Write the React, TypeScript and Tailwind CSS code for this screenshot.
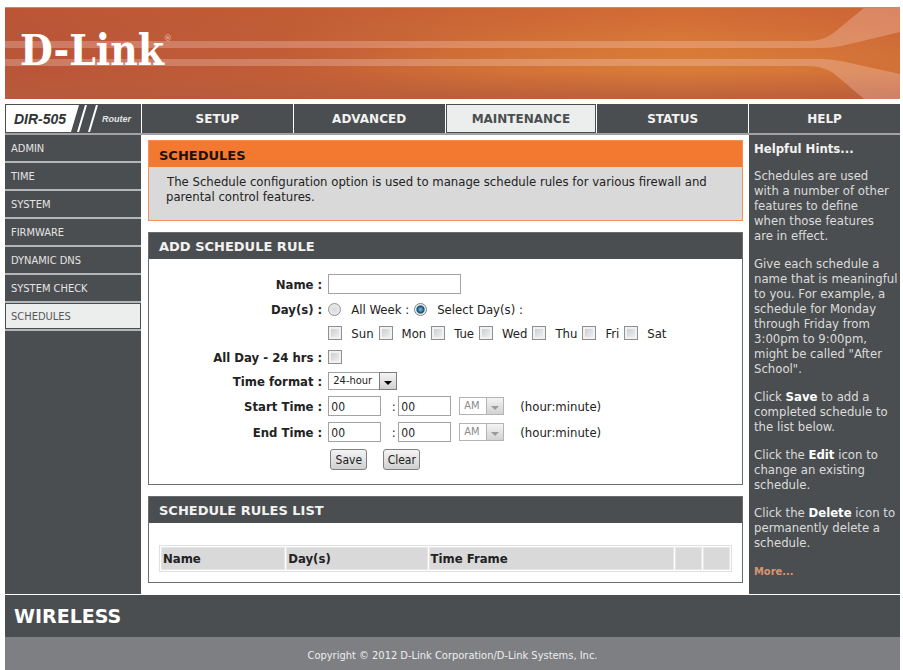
import React, { useState } from "react";
import { clsx } from "clsx";

const tabs = ["SETUP", "ADVANCED", "MAINTENANCE", "STATUS"];

const sideLinks = [
  "ADMIN",
  "TIME",
  "SYSTEM",
  "FIRMWARE",
  "DYNAMIC DNS",
  "SYSTEM CHECK",
  "SCHEDULES",
];

const days = ["Sun", "Mon", "Tue", "Wed", "Thu", "Fri", "Sat"];

function Banner() {
  return (
    <header className="relative h-[92px] overflow-hidden bg-[#c96033]">
      <svg
        className="absolute inset-0 h-full w-full"
        viewBox="0 0 895 92"
        preserveAspectRatio="none"
        aria-hidden="true"
      >
        <defs>
          <linearGradient id="base" x1="0" y1="0" x2="1" y2="0">
            <stop offset="0" stopColor="#b95538" />
            <stop offset="0.3" stopColor="#c05d37" />
            <stop offset="0.5" stopColor="#cc6937" />
            <stop offset="0.75" stopColor="#d77438" />
            <stop offset="1" stopColor="#cf6a38" />
          </linearGradient>
          <radialGradient id="glow" cx="0.76" cy="0.62" r="0.4">
            <stop offset="0" stopColor="#d98438" stopOpacity="0.6" />
            <stop offset="1" stopColor="#d98438" stopOpacity="0" />
          </radialGradient>
          <linearGradient id="shade" x1="0" y1="0" x2="0" y2="1">
            <stop offset="0" stopColor="#c4562f" stopOpacity="0.3" />
            <stop offset="0.3" stopColor="#c4562f" stopOpacity="0" />
            <stop offset="0.7" stopColor="#b95e3c" stopOpacity="0" />
            <stop offset="1" stopColor="#b45c3c" stopOpacity="0.8" />
          </linearGradient>
        </defs>
        <rect width="895" height="92" fill="url(#base)" />
        <rect width="895" height="92" fill="url(#glow)" />
        <rect width="895" height="92" fill="url(#shade)" />
        <g fill="#ffe0d8" fillOpacity="0.28">
          <path d="M0 34H800C815 34 822 31 831 24L860 0H895V25L845 37C832 40 825 41 812 41H0Z" />
          <path d="M0 52H812C825 52 832 53 845 56L895 67V92H859L832 69C824 62 815 59 800 59H0Z" />
        </g>
        <path d="M0 0.5H895" stroke="#b98f7c" />
      </svg>
      <div className="relative flex items-start pt-5 pl-[15px] text-white">
        <span className="font-['DejaVu_Serif_Condensed','DejaVu_Serif',serif] text-[42px] leading-12 font-bold">
          D-Link
        </span>
        <span className="pt-1 text-[9px] font-bold text-[#e3ab98]">®</span>
      </div>
    </header>
  );
}

function ModelBadge() {
  return (
    <div className="flex h-[29px] items-center border border-[#4b4e50] bg-[#4b4e50] font-['Liberation_Sans',Arial,sans-serif] font-bold italic">
      <span className="flex h-full w-[65px] items-center bg-white pl-2 text-sm text-[#333]">
        DIR-505
      </span>
      <svg className="h-full w-7" viewBox="0 0 28 27" aria-hidden="true">
        <path d="M0 0H8L0 27Z" fill="#fff" />
        <path d="M15 0L7 27M26 0L18 27" stroke="#fff" strokeWidth="2" />
      </svg>
      <span className="pl-[3px] text-[9px] text-[#e2e2e2]">Router</span>
    </div>
  );
}

function NavBar() {
  return (
    <nav className="mt-[5px] grid grid-cols-[136px_1fr_151px] gap-px border-b-2 border-[#a3a1a6] text-xs font-bold">
      <ModelBadge />
      <div className="grid grid-cols-4 gap-px">
        {tabs.map((tab) => (
          <a
            key={tab}
            href="#"
            className={clsx(
              "flex h-[29px] items-center justify-center border border-[#4b4e50] font-['DejaVu_Sans',sans-serif]",
              tab === "MAINTENANCE"
                ? "bg-[#eceeed] text-[#4b4e50]"
                : "bg-[#4b4e50] text-[#f2f2f2]"
            )}
          >
            {tab}
          </a>
        ))}
      </div>
      <a
        href="#"
        className="flex h-[29px] items-center justify-center bg-[#4b4e50] font-['DejaVu_Sans',sans-serif] text-[#f2f2f2]"
      >
        HELP
      </a>
    </nav>
  );
}

function Sidebar() {
  return (
    <aside className="bg-[#4b4e50]">
      <ul>
        {sideLinks.map((link) => (
          <li key={link} className="border-b-2 border-[#b5b6b7]">
            <a
              href="#"
              className={clsx(
                "flex h-[26px] items-center px-[5px] text-[11px]",
                link === "SCHEDULES"
                  ? "border border-[#4b4e50] bg-[#eceeed] text-[#55585a]"
                  : "border border-transparent text-[#e4e4e4]"
              )}
            >
              {link}
            </a>
          </li>
        ))}
      </ul>
    </aside>
  );
}

function Panel({ title, children }: { title: string; children: React.ReactNode }) {
  return (
    <section className="border border-[#6b6e70]">
      <h2 className="flex h-[26px] items-center bg-[#4b4e50] px-[10px] pt-px font-['DejaVu_Sans',sans-serif] text-[13px] font-bold text-[#f2f2f2]">
        {title}
      </h2>
      {children}
    </section>
  );
}

function Field({
  label,
  htmlFor,
  children,
}: {
  label: string;
  htmlFor?: string;
  children: React.ReactNode;
}) {
  return (
    <div className="grid min-h-6 grid-cols-[30%_1fr] items-center">
      {htmlFor ? (
        <label htmlFor={htmlFor} className="pr-[6px] text-right font-bold">
          {label}
        </label>
      ) : (
        <span className="pr-[6px] text-right font-bold">{label}</span>
      )}
      <div className="flex items-center">{children}</div>
    </div>
  );
}

const checkClass =
  "h-[14px] w-[14px] appearance-none border border-[#8e8f8f] bg-linear-to-br from-[#c4c7ca] to-[#f6f6f6] shadow-[inset_0_0_0_2px_#f1f1f1] checked:bg-[#2f6d8c]";

function Radio({ id, checked, onChange }: { id: string; checked: boolean; onChange: () => void }) {
  return (
    <input
      type="radio"
      id={id}
      name="dayMode"
      checked={checked}
      onChange={onChange}
      className="h-[13px] w-[13px] appearance-none rounded-full border border-[#8e8f8f] bg-radial from-[#d8dadc] to-[#f2f2f2] checked:border-[#7a8288] checked:bg-radial checked:from-[#5db5d8] checked:from-10% checked:via-[#164a68] checked:via-45% checked:to-[#eef3f5] checked:to-60%"
    />
  );
}

function Select({
  id,
  label,
  options,
  disabled,
  className,
}: {
  id: string;
  label?: string;
  options: string[];
  disabled?: boolean;
  className: string;
}) {
  return (
    <span className={clsx("relative inline-block h-[18px]", className)}>
      <select
        id={id}
        aria-label={label}
        disabled={disabled}
        className={clsx(
          "block h-full w-full appearance-none border bg-white pl-1 text-[11px] leading-4",
          disabled ? "border-[#b4b4b4] text-[#8a8a8a]" : "border-[#a0a0a0] text-[#222]"
        )}
      >
        {options.map((option) => (
          <option key={option}>{option}</option>
        ))}
      </select>
      <span
        className={clsx(
          "pointer-events-none absolute inset-y-0 right-0 flex w-[18px] items-center justify-center border bg-linear-to-b from-[#f4f4f4] to-[#d2d2d2]",
          disabled ? "border-[#b4b4b4] text-[#9a9a9a]" : "border-[#7c7c7c] text-black"
        )}
      >
        <svg className="mt-1 h-1 w-2" viewBox="0 0 8 4" fill="currentColor" aria-hidden="true">
          <path d="M0 0H8L4 4Z" />
        </svg>
      </span>
    </span>
  );
}

const inputClass = "my-[3px] h-5 border border-[#a3a3a3] bg-white px-[2px] pt-px text-xs text-[#222]";

function TimeField({ label, name }: { label: string; name: string }) {
  return (
    <Field label={label} htmlFor={`${name}Hour`}>
      <input id={`${name}Hour`} type="text" defaultValue="00" className={clsx(inputClass, "w-[53px]")} />
      <span className="w-[17px] pl-2 text-center">:</span>
      <input
        type="text"
        aria-label={`${label} minute`}
        defaultValue="00"
        className={clsx(inputClass, "w-[53px]")}
      />
      <Select
        id={`${name}Period`}
        label={`${label} AM or PM`}
        options={["AM", "PM"]}
        disabled
        className="ml-2 w-[45px]"
      />
      <span className="pl-4">(hour:minute)</span>
    </Field>
  );
}

function AddRule() {
  const [dayMode, setDayMode] = useState("select");

  return (
    <Panel title="ADD SCHEDULE RULE">
      <form className="pt-3 pb-[14px] pl-[2px]" onSubmit={(e) => e.preventDefault()}>
        <Field label="Name :" htmlFor="ruleName">
          <input id="ruleName" type="text" className={clsx(inputClass, "w-[133px]")} />
        </Field>
        <Field label="Day(s) :">
          <Radio id="allWeek" checked={dayMode === "all"} onChange={() => setDayMode("all")} />
          <label htmlFor="allWeek" className="pr-[5px] pl-[10px]">
            All Week :
          </label>
          <Radio id="selectDays" checked={dayMode === "select"} onChange={() => setDayMode("select")} />
          <label htmlFor="selectDays" className="pl-[10px]">
            Select Day(s) :
          </label>
        </Field>
        <Field label="">
          {days.map((day) => (
            <React.Fragment key={day}>
              <input id={day} type="checkbox" className={checkClass} />
              <label htmlFor={day} className="pr-[5px] pl-[9px]">
                {day}
              </label>
            </React.Fragment>
          ))}
        </Field>
        <Field label="All Day - 24 hrs :" htmlFor="allDay">
          <input id="allDay" type="checkbox" className={checkClass} />
        </Field>
        <Field label="Time format :" htmlFor="timeFormat">
          <Select id="timeFormat" options={["24-hour", "12-hour"]} className="w-[69px]" />
        </Field>
        <TimeField label="Start Time :" name="start" />
        <TimeField label="End Time :" name="end" />
        <div className="mt-1 ml-[30%] flex gap-4 pl-[2px]">
          {["Save", "Clear"].map((action) => (
            <button
              key={action}
              type={action === "Save" ? "submit" : "reset"}
              className="h-[21px] w-[37px] rounded-[3px] border border-[#808080] bg-linear-to-b from-[#f4f4f4] to-[#d0d0d0] text-xs text-[#222]"
            >
              {action}
            </button>
          ))}
        </div>
      </form>
    </Panel>
  );
}

function RulesList() {
  const cell =
    "h-[23px] border border-[#e6e6e6] bg-[#d9d9d9] px-px text-left font-bold";

  return (
    <Panel title="SCHEDULE RULES LIST">
      <div className="px-[10px] pt-[22px] pb-[10px]">
        <table className="w-full table-fixed border-separate border-spacing-px border border-[#e0e0e0]">
          <thead>
            <tr>
              <th className={clsx(cell, "w-[22%]")}>Name</th>
              <th className={clsx(cell, "w-[25%]")}>Day(s)</th>
              <th className={cell}>Time Frame</th>
              <th className={clsx(cell, "w-[27px]")} aria-label="Edit" />
              <th className={clsx(cell, "w-[27px]")} aria-label="Delete" />
            </tr>
          </thead>
        </table>
      </div>
    </Panel>
  );
}

function Hints() {
  return (
    <aside className="bg-[#4b4e50] pt-[6px] pr-[2px] pl-[5px] text-[#dcdcdc]">
      <h3 className="font-bold text-[#f2f2f2]">Helpful Hints...</h3>
      <div className="mt-3 space-y-[13px]">
        <p>
          Schedules are used
          <br />
          with a number of other features to define
          <br />
          when those features
          <br />
          are in effect.
        </p>
        <p>
          Give each schedule a name that is meaningful to you. For example, a
          schedule for Monday through Friday from 3:00pm to 9:00pm, might be
          called "After School".
        </p>
        <p>
          Click <b className="text-white">Save</b> to add a completed schedule to the list below.
        </p>
        <p>
          Click the <b className="text-white">Edit</b> icon to change an existing schedule.
        </p>
        <p>
          Click the <b className="text-white">Delete</b> icon to permanently delete a schedule.
        </p>
        <p>
          <a href="#" className="text-[11px] font-bold text-[#d99570]">
            More...
          </a>
        </p>
      </div>
    </aside>
  );
}

export default function App() {
  return (
    <div className="bg-white pt-[7px] pr-[3px] pl-[5px] font-['DejaVu_Sans_Condensed','DejaVu_Sans',sans-serif] text-[13px] leading-[15px] text-[#222]">
      <Banner />
      <NavBar />
      <div className="grid grid-cols-[136px_1fr_151px] gap-px">
        <Sidebar />
        <main className="flex flex-col gap-[11px] pt-[5px] pr-[5px] pb-[11px] pl-[6px]">
          <section className="border border-[#f2905a] bg-[#d9d9d9]">
            <h1 className="flex h-[26px] items-center bg-[#f47930] px-[10px] pt-[2px] font-['DejaVu_Sans',sans-serif] text-[13px] font-bold text-[#1c1208]">
              SCHEDULES
            </h1>
            <p className="px-[17px] pt-[7px] pb-4 indent-px">
              The Schedule configuration option is used to manage schedule rules
              for various firewall and parental control features.
            </p>
          </section>
          <AddRule />
          <RulesList />
        </main>
        <Hints />
      </div>
      <div className="mt-px flex h-[42px] items-center bg-[#4b4e50] pl-[9px] font-['DejaVu_Sans',sans-serif] text-[19px] font-bold text-white">
        WIRELESS
      </div>
      <footer className="flex h-[33px] items-center justify-center bg-[#7d7f82] pt-1 text-[11px] text-[#eee]">
        Copyright © 2012 D-Link Corporation/D-Link Systems, Inc.
      </footer>
    </div>
  );
}
